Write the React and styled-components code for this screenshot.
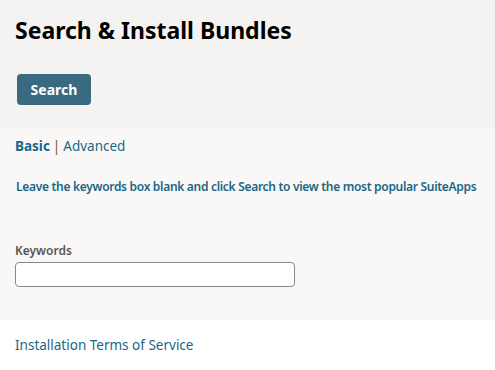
import React from 'react'
import styled, { createGlobalStyle } from 'styled-components'

const GlobalStyle = createGlobalStyle`
  html, body {
    margin: 0;
    padding: 0;
    background: #ffffff;
    font-family: "Noto Sans", "Open Sans", sans-serif;
  }
`

const Header = styled.div`
  background: #f4f3f2;
  padding: 15px 15px 23px 15px;
  display: flex;
  flex-direction: column;
  align-items: flex-start;
`

const Title = styled.h1`
  margin: 0;
  font-size: 23px;
  font-weight: 700;
  line-height: 30px;
  color: #000;
`

const SearchButton = styled.button`
  margin: 29px 0 0 2px;
  width: 74px;
  height: 31px;
  border: none;
  border-radius: 4px;
  background: #3a6a7f;
  color: #fff;
  font-family: inherit;
  font-size: 14px;
  font-weight: 700;
  cursor: pointer;
`

const Body = styled.div`
  background: #f9f8f7;
  padding: 8px 15px 33px 15px;
`

const Tabs = styled.div`
  font-size: 13.5px;
  line-height: 20px;
  color: #1b6685;
`

const Tab = styled.a`
  color: #1b6685;
  font-weight: ${p => (p.$active ? 700 : 400)};
  text-decoration: none;
`

const Pipe = styled.span`
  color: #7a5630;
  margin: 0 3px;
`

const Hint = styled.p`
  margin: 22px 0 0 1px;
  font-size: 12px;
  font-weight: 600;
  line-height: 18px;
  letter-spacing: -0.3px;
  white-space: nowrap;
  color: #1b6685;
`

const Field = styled.div`
  margin-top: 47px;
  display: flex;
  flex-direction: column;
  gap: 3px;
`

const Label = styled.label`
  font-size: 12px;
  font-weight: 600;
  line-height: 16px;
  color: #5b5752;
`

const Input = styled.input`
  width: 280px;
  height: 25px;
  box-sizing: border-box;
  border: 1px solid #8a8886;
  border-radius: 4px;
  background: #fff;
`

const Footer = styled.div`
  padding: 13px 15px 15px 15px;
`

const FooterLink = styled.a`
  font-size: 13.5px;
  line-height: 20px;
  color: #1b6685;
  text-decoration: none;
`

export default function App() {
  return (
    <>
      <GlobalStyle />
      <Header>
        <Title>Search &amp; Install Bundles</Title>
        <SearchButton>Search</SearchButton>
      </Header>
      <Body>
        <Tabs>
          <Tab $active>Basic</Tab>
          <Pipe>|</Pipe>
          <Tab>Advanced</Tab>
        </Tabs>
        <Hint>Leave the keywords box blank and click Search to view the most popular SuiteApps</Hint>
        <Field>
          <Label>Keywords</Label>
          <Input type="text" />
        </Field>
      </Body>
      <Footer>
        <FooterLink>Installation Terms of Service</FooterLink>
      </Footer>
    </>
  )
}
